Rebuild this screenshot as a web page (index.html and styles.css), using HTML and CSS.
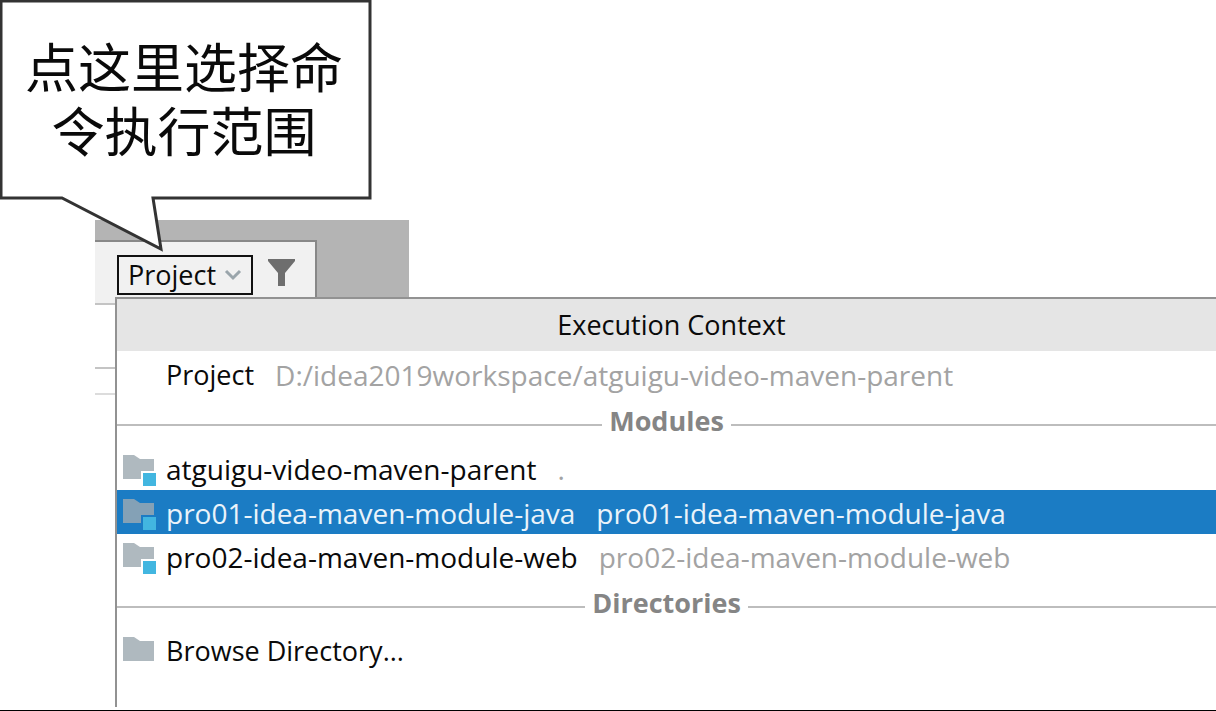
FILE: index.html
```html
<!DOCTYPE html>
<html lang="zh-CN">
<head>
<meta charset="utf-8">
<title>Execution Context</title>
<link rel="stylesheet" href="styles.css">
</head>
<body>
<svg class="defs" aria-hidden="true">
  <symbol id="folder" viewBox="0 0 34 32"><path class="folder-shape" d="M0 1h11l6 4h14v20H0z"/></symbol>
  <symbol id="module" viewBox="0 0 34 32"><path class="folder-shape" d="M0 1h11l6 4h14v12H18v8H0z"/><path class="module-mark" d="M20 19h13v13H20z"/></symbol>
</svg>
<main class="page">
  <section class="window">
    <div class="backdrop">
      <div class="toolbar">
        <button class="scope" type="button" aria-haspopup="listbox" aria-expanded="true">Project
          <svg class="chevron" viewBox="0 0 18 12" aria-hidden="true"><path d="M2 2l7 7 7-7"/></svg>
        </button>
        <button class="filter" type="button" aria-label="Filter">
          <svg viewBox="0 0 28 28" aria-hidden="true"><path d="M0 0h27v2L17 14v13h-7V14L0 2z"/></svg>
        </button>
      </div>
    </div>
    <div class="rule"></div>
    <div class="strip"></div>
  </section>

  <section class="popup" aria-labelledby="popup-title">
    <h1 class="popup-title" id="popup-title">Execution Context</h1>
    <div class="list">
      <button class="row" type="button"><span class="icon"></span><span>Project</span><span class="path">D:/idea2019workspace/atguigu-video-maven-parent</span></button>
      <h2 class="group">Modules</h2>
      <button class="row module" type="button"><svg class="icon" aria-hidden="true"><use href="#module"/></svg><span>atguigu-video-maven-parent</span><span class="path">.</span></button>
      <button class="row module selected" type="button"><svg class="icon" aria-hidden="true"><use href="#module"/></svg><span>pro01-idea-maven-module-java</span><span class="path">pro01-idea-maven-module-java</span></button>
      <button class="row module" type="button"><svg class="icon" aria-hidden="true"><use href="#module"/></svg><span>pro02-idea-maven-module-web</span><span class="path">pro02-idea-maven-module-web</span></button>
      <h2 class="group">Directories</h2>
      <button class="row" type="button"><svg class="icon" aria-hidden="true"><use href="#folder"/></svg><span>Browse Directory...</span></button>
    </div>
  </section>

  <aside class="callout">
    <svg class="bubble" viewBox="0 0 374 254" aria-hidden="true"><path d="M1 1H370V198H153L161 249L62 198H1z"/></svg>
    <p class="note">点这里选择命<br>令执行范围</p>
  </aside>
</main>
</body>
</html>
```
FILE: styles.css
```css
* { box-sizing: border-box; }

body {
  margin: 0;
  background: #fff;
  color: #0a0a0a;
  font: 27px/36px "Open Sans", "Noto Sans CJK SC", sans-serif;
}

button {
  margin: 0;
  padding: 0;
  border: 0;
  background: none;
  color: inherit;
  font: inherit;
  text-align: left;
}

.defs { position: absolute; width: 0; height: 0; }

.page {
  position: relative;
  min-height: 100vh;
  padding: 220px 0 0 95px;
  border-bottom: 1px solid #000;
}

.window { width: 314px; }

.backdrop {
  height: 77px;
  padding-top: 20px;
  background: #b4b4b4;
}

.toolbar {
  display: flex;
  align-items: flex-start;
  gap: 15px;
  width: 222px;
  height: 65px;
  padding: 13px 0 0 22px;
  border: 2px solid #888;
  border-left: 0;
  border-bottom-color: #c4c4c4;
  background: #f1f1f1;
}

.scope {
  display: flex;
  align-items: center;
  gap: 8px;
  height: 40px;
  padding: 0 9px;
  border: 2px solid #111;
}

.chevron {
  width: 18px;
  height: 12px;
  fill: none;
  stroke: #9aa5ab;
  stroke-width: 3;
}

.filter svg {
  display: block;
  width: 28px;
  height: 28px;
  margin-top: 4px;
  fill: #6e6e6e;
}

.rule {
  height: 72px;
  border-bottom: 2px solid #c4c4c4;
}

.strip {
  height: 26px;
  border-bottom: 2px solid #dcdcdc;
}

.popup {
  position: absolute;
  top: 297px;
  right: 0;
  left: 115px;
  min-height: 410px;
  border-top: 2px solid #929292;
  border-left: 2px solid #929292;
  background: #fff;
}

.popup-title {
  margin: 0;
  padding: 8px 0 8px 10px;
  background: #e5e5e5;
  font-size: 27px;
  font-weight: 400;
  text-align: center;
}

.list { padding-top: 1px; }

.row {
  display: flex;
  align-items: center;
  width: 100%;
  height: 44px;
  padding: 2px 0 0 6px;
  white-space: nowrap;
}

.icon {
  flex: none;
  width: 34px;
  height: 32px;
  margin: 2px 9px 0 0;
  color: #afb9bf;
}

.folder-shape { fill: currentColor; }
.module-mark { fill: #42b6e0; }

.module,
.path { font-size: 28px; }

.path {
  margin-left: 21px;
  color: #a3a3a3;
}

.selected { background: #1b7cc4; color: #eaf3fa; }
.selected .path { color: inherit; }
.selected .icon { color: #84a1b6; }

.group {
  display: flex;
  align-items: center;
  gap: 7px;
  height: 50px;
  margin: 0;
  padding-bottom: 1px;
  color: #858585;
  font-size: 27px;
  font-weight: 700;
}

.group::before,
.group::after {
  content: "";
  flex: 1;
  height: 2px;
  margin-top: 9px;
  background: #bdbdbd;
}

.callout {
  position: absolute;
  top: 0;
  left: 0;
  width: 374px;
}

.bubble {
  display: block;
  width: 374px;
  height: 254px;
  fill: #fff;
  stroke: #333;
  stroke-width: 3;
}

.note {
  position: absolute;
  top: 0;
  left: 0;
  width: 368px;
  margin: 0;
  padding-top: 33px;
  font: 53px/64px "Noto Sans CJK SC", sans-serif;
  text-align: center;
}
```
